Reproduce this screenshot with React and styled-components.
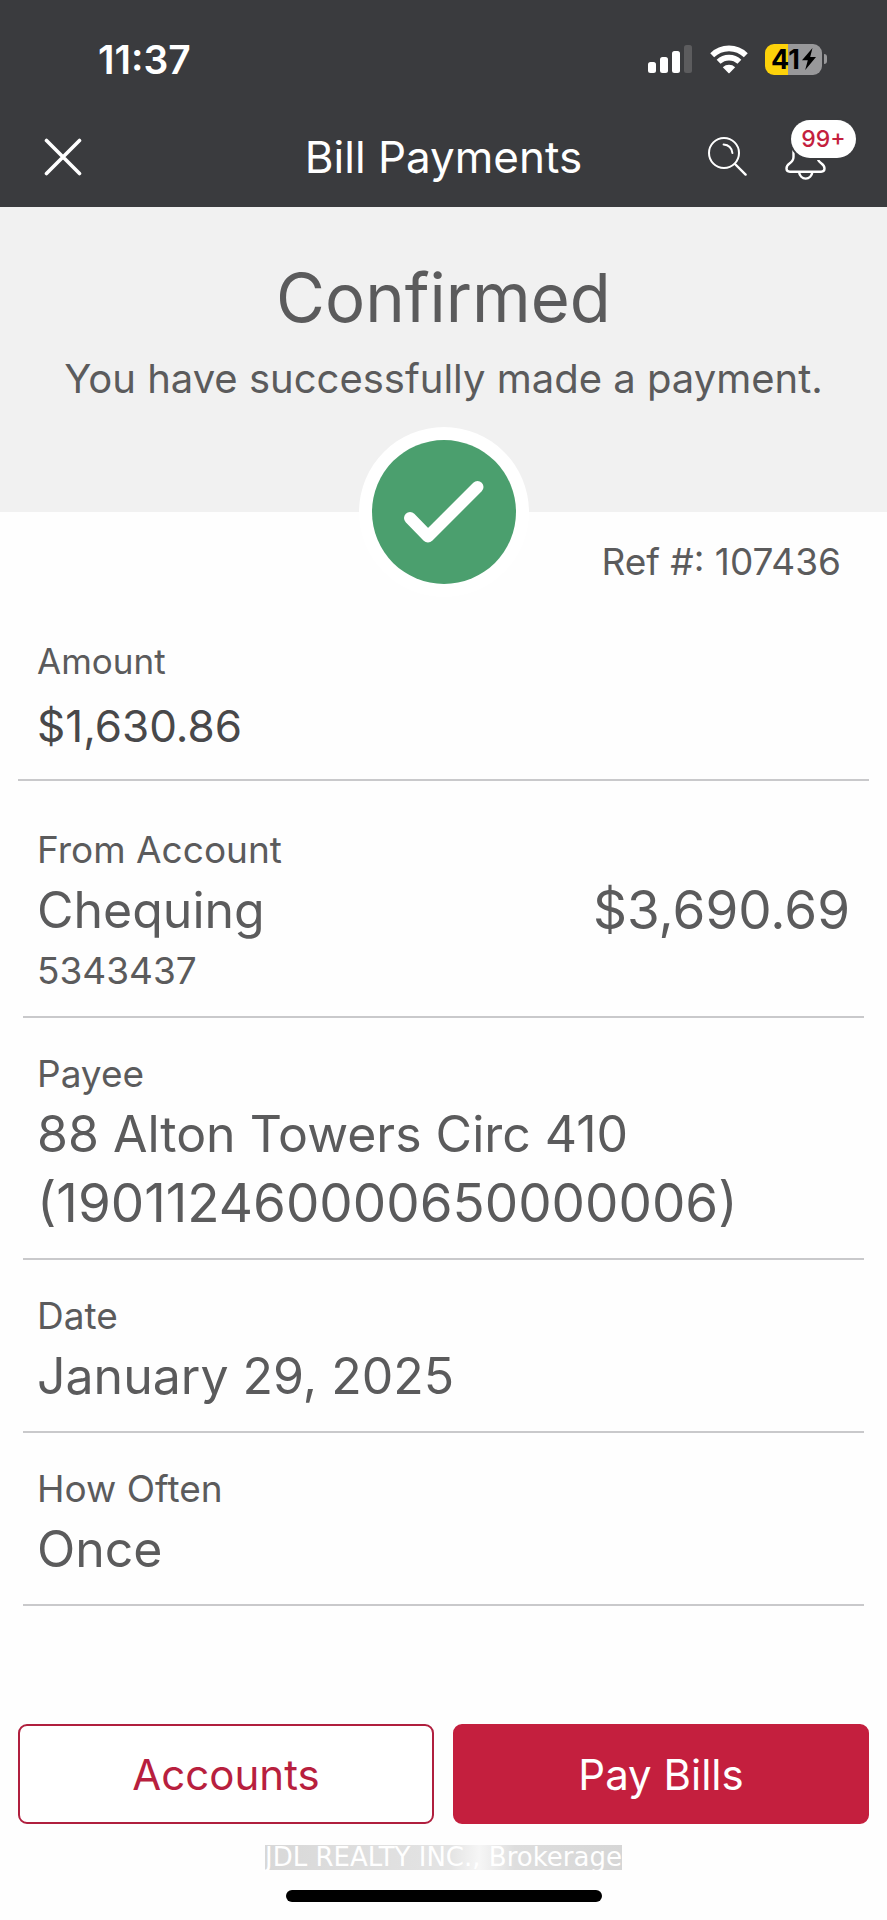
import React from "react";
import styled, { createGlobalStyle } from "styled-components";

const payment = {
  reference: "107436",
  amount: "$1,630.86",
  account: { name: "Chequing", number: "5343437", balance: "$3,690.69" },
  payee: { name: "88 Alton Towers Circ 410", number: "(190112460000650000006)" },
  date: "January 29, 2025",
  frequency: "Once",
};

function SignalIcon() {
  return (
    <svg width="45" height="30" viewBox="0 0 45 30" aria-hidden="true">
      <rect x="0" y="18" width="8" height="11" rx="2.5" fill="#fff" />
      <rect x="12" y="13" width="8" height="16" rx="2.5" fill="#fff" />
      <rect x="24" y="7" width="8" height="22" rx="2.5" fill="#fff" />
      <rect x="36" y="1" width="8" height="28" rx="2.5" fill="#5c5c5e" />
    </svg>
  );
}

function WifiIcon() {
  return (
    <svg width="38" height="30" viewBox="0 0 38 30" aria-hidden="true">
      <g fill="none" stroke="#fff" strokeWidth="5.6">
        <path d="M2.2 11.2a24 24 0 0 1 33.6 0" />
        <path d="M8.6 17.8a15 15 0 0 1 20.8 0" />
      </g>
      <path
        d="M12.8 23.2a9.4 9.4 0 0 1 12.4 0L19.6 29a.9.9 0 0 1-1.2 0z"
        fill="#fff"
      />
    </svg>
  );
}

function BoltIcon() {
  return (
    <svg width="14" height="22" viewBox="0 0 14 22" aria-hidden="true">
      <path d="M10.5 0L0 12.2h5.8L3.2 22 14 9H8.2z" fill="#000" />
    </svg>
  );
}

function CloseIcon() {
  return (
    <svg width="38" height="38" viewBox="0 0 38 38" aria-hidden="true">
      <path
        d="M2.5 2.5l33 33M35.5 2.5l-33 33"
        stroke="#fff"
        strokeWidth="3.6"
        strokeLinecap="round"
      />
    </svg>
  );
}

function SearchIcon() {
  return (
    <svg width="39" height="39" viewBox="0 0 39 39" aria-hidden="true">
      <g fill="none" stroke="#fff" strokeWidth="2" strokeLinecap="round">
        <circle cx="16" cy="16" r="15" />
        <path d="M27 27l10.6 10.6" strokeWidth="2.4" />
        <path d="M15.6 7.6c4.8.4 8.2 3.6 8.8 8.4" />
      </g>
    </svg>
  );
}

function BellIcon() {
  return (
    <svg width="41" height="46" viewBox="0 0 41 46" aria-hidden="true">
      <g fill="none" stroke="#fff" strokeWidth="2.4" strokeLinejoin="round">
        <path d="M20.5 3.5c-7 0-12 5.5-12 13v6.5c0 3-1.4 4.7-4 6.500-2 1.400-3 3.200-3 5 0 2 1.400 3.200 3.400 3.200h31.200c2 0 3.400-1.200 3.400-3.200 0-1.800-1-3.600-3-5-2.600-1.800-4-3.500-4-6.500v-6.500c0-7.500-5-13-12-13z" />
        <path d="M14 38c.6 3.8 3.2 6.6 6.7 6.6s6.100-2.800 6.700-6.600" />
      </g>
    </svg>
  );
}

function CheckIcon() {
  return (
    <svg width="144" height="144" viewBox="0 0 144 144" aria-hidden="true">
      <circle cx="72" cy="72" r="72" fill="#4b9f6e" />
      <path
        d="M38 78l18 18.5L105.5 47"
        fill="none"
        stroke="#fff"
        strokeWidth="12"
        strokeLinecap="round"
        strokeLinejoin="round"
      />
    </svg>
  );
}

function App() {
  return (
    <>
      <GlobalStyle />
      <Screen>
        <Header>
          <StatusBar>
            <Time>11:37</Time>
            <StatusIcons>
              <SignalIcon />
              <WifiIcon />
              <Battery>
                <BatteryBody $level={41}>
                  41
                  <BoltIcon />
                </BatteryBody>
                <BatteryTip />
              </Battery>
            </StatusIcons>
          </StatusBar>
          <NavBar>
            <IconButton type="button" aria-label="Close">
              <CloseIcon />
            </IconButton>
            <Title>Bill Payments</Title>
            <NavActions>
              <IconButton type="button" aria-label="Search">
                <SearchIcon />
              </IconButton>
              <IconButton type="button" aria-label="Notifications">
                <BellIcon />
                <Badge>99+</Badge>
              </IconButton>
            </NavActions>
          </NavBar>
        </Header>

        <Hero>
          <HeroTitle>Confirmed</HeroTitle>
          <HeroText>You have successfully made a payment.</HeroText>
          <CheckRing>
            <CheckIcon />
          </CheckRing>
        </Hero>
        <Reference>Ref #: {payment.reference}</Reference>

        <Details>
          <AmountRow>
            <Label>Amount</Label>
            <Amount>{payment.amount}</Amount>
          </AmountRow>
          <AccountRow>
            <Label>From Account</Label>
            <AccountLine>
              <span>{payment.account.name}</span>
              <Digits>{payment.account.balance}</Digits>
            </AccountLine>
            <AccountNumber>{payment.account.number}</AccountNumber>
          </AccountRow>
          <Row>
            <Label>Payee</Label>
            <Value>
              {payment.payee.name}
              <Digits>{payment.payee.number}</Digits>
            </Value>
          </Row>
          <Row>
            <Label>Date</Label>
            <Value>{payment.date}</Value>
          </Row>
          <Row>
            <Label>How Often</Label>
            <Value>{payment.frequency}</Value>
          </Row>
        </Details>

        <Footer>
          <Actions>
            <ActionButton type="button">Accounts</ActionButton>
            <ActionButton type="button" $primary>
              Pay Bills
            </ActionButton>
          </Actions>
          <Watermark>JDL REALTY INC., Brokerage</Watermark>
          <HomeIndicator />
        </Footer>
      </Screen>
    </>
  );
}

const GlobalStyle = createGlobalStyle`
  * {
    box-sizing: border-box;
  }
  body {
    margin: 0;
    background-color: #fefefe;
    color: #5b5b5c;
    font-family: Inter, "Liberation Sans", sans-serif;
  }
  svg {
    display: block;
  }
`;

const Screen = styled.main`
  display: flex;
  flex-direction: column;
`;

const Header = styled.header`
  background-color: #3a3b3e;
  color: white;
`;

const StatusBar = styled.div`
  display: flex;
  justify-content: space-between;
  align-items: center;
  height: 108px;
  padding: 10px 60px 0 98px;
`;

const Time = styled.time`
  font-size: 39px;
  font-weight: 600;
`;

const StatusIcons = styled.div`
  display: flex;
  align-items: center;
  gap: 17px;
`;

const Battery = styled.div`
  display: flex;
  align-items: center;
  gap: 2px;
`;

const BatteryBody = styled.div`
  display: flex;
  align-items: center;
  justify-content: center;
  gap: 2px;
  width: 57px;
  height: 31px;
  border-radius: 9px;
  background: linear-gradient(
    to right,
    #fdd20a ${(props) => props.$level}%,
    #98989a ${(props) => props.$level}%
  );
  color: black;
  font-size: 27px;
  font-weight: 700;
`;

const BatteryTip = styled.div`
  width: 3px;
  height: 10px;
  border-radius: 0 4px 4px 0;
  background-color: #98989a;
`;

const NavBar = styled.nav`
  display: grid;
  grid-template-columns: 1fr auto 1fr;
  align-items: center;
  height: 99px;
  padding: 0 61px 2px 44px;
`;

const IconButton = styled.button`
  position: relative;
  justify-self: start;
  padding: 0;
  border: none;
  background: none;
  cursor: pointer;
`;

const Title = styled.h1`
  margin: 0;
  padding-left: 17px;
  font-size: 44px;
  font-weight: 400;
`;

const NavActions = styled.div`
  display: flex;
  align-items: center;
  justify-content: flex-end;
  gap: 38px;
`;

const Badge = styled.span`
  position: absolute;
  top: -14px;
  left: 6px;
  width: 65px;
  height: 38px;
  border-radius: 19px;
  background-color: white;
  box-shadow: 0 0 0 2px #3a3b3e;
  color: #c41f3e;
  font-family: Inter, "Liberation Sans", sans-serif;
  font-size: 23px;
  font-weight: 500;
  line-height: 38px;
  text-align: center;
`;

const Hero = styled.section`
  position: relative;
  padding: 51px 20px 105px;
  background-color: #f1f1f1;
  text-align: center;
`;

const HeroTitle = styled.h2`
  margin: 0 0 13px;
  font-size: 67px;
  font-weight: 400;
  line-height: 80px;
`;

const HeroText = styled.p`
  margin: 0;
  font-size: 40px;
  line-height: 56px;
`;

const CheckRing = styled.div`
  position: absolute;
  bottom: 0;
  left: 50%;
  padding: 13px;
  border-radius: 50%;
  background-color: white;
  transform: translate(-50%, 50%);
`;

const Reference = styled.p`
  margin: 0;
  padding: 24px 46px 47px;
  font-size: 37px;
  line-height: 52px;
  text-align: right;
`;

const Details = styled.dl`
  margin: 0;
`;

const Row = styled.div`
  margin: 0 23px;
  padding: 30px 14px 20px;
  border-bottom: 2px solid #c9c9cb;
`;

const AmountRow = styled(Row)`
  margin: 0 18px;
  padding: 0 19px 18px;
`;

const AccountRow = styled(Row)`
  padding-top: 43px;
  padding-bottom: 19px;
`;

const Label = styled.dt`
  font-size: 37px;
  line-height: 52px;

  ${AmountRow} & {
    font-size: 35px;
  }
`;

const Value = styled.dd`
  margin: 0;
  font-size: 50px;
  line-height: 69px;
`;

const Digits = styled.span`
  display: block;
  font-size: 53px;
`;

const Amount = styled(Value)`
  padding-top: 5px;
  color: #48484a;
  font-size: 44px;
`;

const AccountLine = styled(Value)`
  display: flex;
  justify-content: space-between;
`;

const AccountNumber = styled(Value)`
  font-size: 37px;
  line-height: 52px;
`;

const Footer = styled.footer`
  display: flex;
  flex-direction: column;
  align-items: center;
  padding: 118px 18px 18px;
`;

const Actions = styled.div`
  display: flex;
  align-self: stretch;
  gap: 19px;
`;

const ActionButton = styled.button`
  flex: 1;
  height: 100px;
  border: 2px solid ${(props) => (props.$primary ? "#c41f3e" : "#b01f3e")};
  border-radius: 9px;
  background-color: ${(props) => (props.$primary ? "#c41f3e" : "white")};
  color: ${(props) => (props.$primary ? "white" : "#b81f3e")};
  font-family: inherit;
  font-size: 42px;
  cursor: pointer;
`;

const Watermark = styled.p`
  margin: 21px 0 20px;
  background: linear-gradient(
    to right,
    #d8d8d8,
    #e0e0e0 36%,
    #e4e4e4 52%,
    #f6f6f6 60%,
    #dedede 70%,
    #d6d6d6
  );
  color: white;
  font-family: "DejaVu Sans", sans-serif;
  font-size: 26px;
  line-height: 25px;
`;

const HomeIndicator = styled.div`
  width: 316px;
  height: 12px;
  border-radius: 6px;
  background-color: black;
`;

export default App;
